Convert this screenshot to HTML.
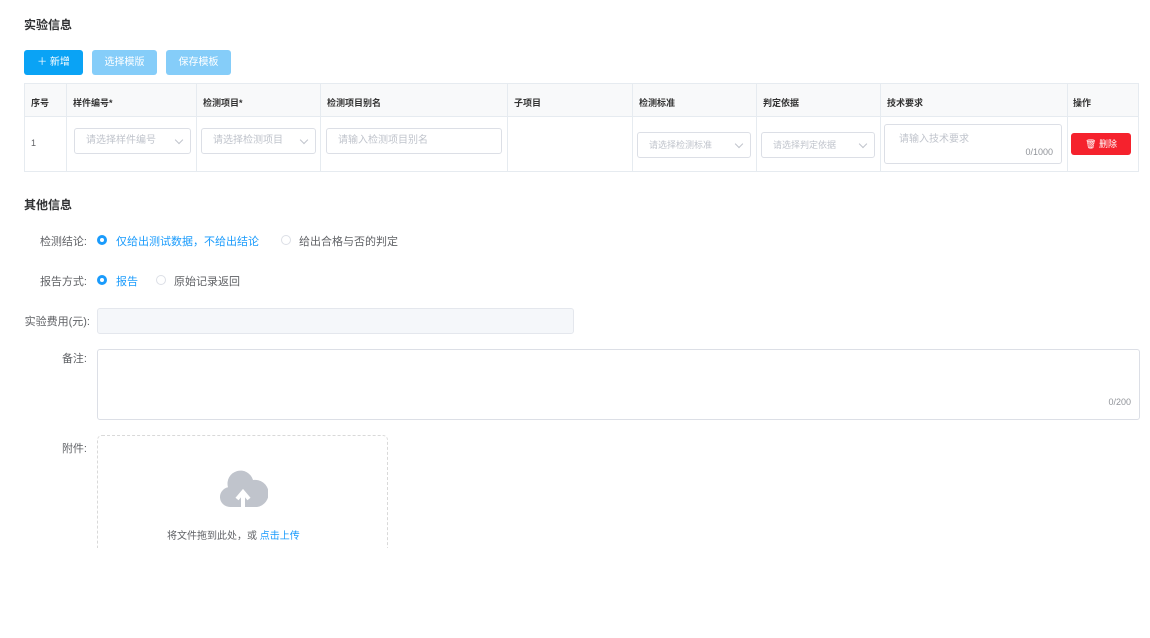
<!DOCTYPE html>
<html><head><meta charset="utf-8"><style>
*{box-sizing:border-box;margin:0;padding:0}
body{width:1150px;height:638px;background:#fff;font-family:"Liberation Sans","Noto Sans CJK SC",sans-serif;font-size:10px;color:#606266;position:relative;overflow:hidden}
.a{position:absolute}
.t{font-size:12px;font-weight:bold;color:#303133}
.btn{position:absolute;top:50px;height:25px;border-radius:3px;color:#fff;font-size:10px;line-height:25px;text-align:center}
.cell{position:absolute;border-right:1px solid #e6ebf0;height:100%;top:0}
.in{position:absolute;border:1px solid #dcdfe6;border-radius:3px;background:#fff;color:#c0c4cc;font-size:10px;padding-left:11px;line-height:24px;height:26px;top:128px}
.ch{position:absolute;right:8px;top:8px;width:6px;height:6px;border-right:1px solid #c0c4cc;border-bottom:1px solid #c0c4cc;transform:rotate(45deg)}
.r{position:absolute;width:10px;height:10px;border-radius:50%;border:1px solid #dcdfe6}
.r.on{border:3px solid #1a9bfc;background:#fff}
.lbl{position:absolute;font-size:11px;color:#606266;text-align:right}
.f{font-size:11px}
</style></head><body>
<div class="a t" style="left:24px;top:16px">实验信息</div>
<div class="btn" style="left:24px;width:59px;background:#0aa3f5">＋ 新增</div>
<div class="btn" style="left:92px;width:65px;background:#85cdf9">选择模版</div>
<div class="btn" style="left:166px;width:65px;background:#85cdf9">保存模板</div>

<div class="a" style="left:24px;top:83px;width:1115px;height:89px;border:1px solid #e6ebf0">
 <div class="a" style="left:0;top:0;width:100%;height:33px;background:#f8f9fa;border-bottom:1px solid #e6ebf0"></div>
 <div class="cell" style="left:41px"></div><div class="cell" style="left:171px"></div><div class="cell" style="left:295px"></div><div class="cell" style="left:482px"></div><div class="cell" style="left:607px"></div><div class="cell" style="left:731px"></div><div class="cell" style="left:855px"></div><div class="cell" style="left:1042px"></div>
 <div class="a" style="top:12px;left:6px;font-weight:bold;color:#333;font-size:9px">序号</div>
 <div class="a" style="top:12px;left:48px;font-weight:bold;color:#333;font-size:9px">样件编号*</div>
 <div class="a" style="top:12px;left:178px;font-weight:bold;color:#333;font-size:9px">检测项目*</div>
 <div class="a" style="top:12px;left:302px;font-weight:bold;color:#333;font-size:9px">检测项目别名</div>
 <div class="a" style="top:12px;left:489px;font-weight:bold;color:#333;font-size:9px">子项目</div>
 <div class="a" style="top:12px;left:614px;font-weight:bold;color:#333;font-size:9px">检测标准</div>
 <div class="a" style="top:12px;left:738px;font-weight:bold;color:#333;font-size:9px">判定依据</div>
 <div class="a" style="top:12px;left:862px;font-weight:bold;color:#333;font-size:9px">技术要求</div>
 <div class="a" style="top:12px;left:1048px;font-weight:bold;color:#333;font-size:9px">操作</div>
 <div class="a" style="top:54px;left:6px;font-size:9px">1</div>
</div>
<div class="in" style="left:74px;width:117px">请选择样件编号<span class="ch"></span></div>
<div class="in" style="left:201px;width:115px">请选择检测项目<span class="ch"></span></div>
<div class="in" style="left:326px;width:176px">请输入检测项目别名</div>
<div class="in" style="left:637px;width:114px;top:132px;font-size:9px">请选择检测标准<span class="ch"></span></div>
<div class="in" style="left:761px;width:114px;top:132px;font-size:9px">请选择判定依据<span class="ch"></span></div>
<div class="a" style="left:884px;top:124px;width:178px;height:40px;border:1px solid #dcdfe6;border-radius:3px;color:#c0c4cc;padding:5px 0 0 14px">请输入技术要求<span class="a" style="right:8px;bottom:6px;font-size:9px;color:#909399">0/1000</span></div>
<div class="a" style="left:1071px;top:133px;width:60px;height:22px;background:#f5222d;border-radius:3px;color:#fff;text-align:center;line-height:22px;font-size:9px">🗑 删除</div>

<div class="a t" style="left:24px;top:196px">其他信息</div>
<div class="lbl" style="left:20px;width:67px;top:233px">检测结论:</div>
<div class="r on" style="left:97px;top:235px"></div>
<div class="a f" style="left:116px;top:233px;color:#1a9bfc">仅给出测试数据，不给出结论</div>
<div class="r" style="left:281px;top:235px"></div>
<div class="a f" style="left:299px;top:233px">给出合格与否的判定</div>
<div class="lbl" style="left:20px;width:67px;top:273px">报告方式:</div>
<div class="r on" style="left:97px;top:275px"></div>
<div class="a f" style="left:116px;top:273px;color:#1a9bfc">报告</div>
<div class="r" style="left:156px;top:275px"></div>
<div class="a f" style="left:174px;top:273px">原始记录返回</div>
<div class="lbl" style="left:4px;width:86px;top:313px">实验费用(元):</div>
<div class="a" style="left:97px;top:308px;width:477px;height:26px;border:1px solid #e4e7ed;border-radius:3px;background:#f5f7fa"></div>
<div class="lbl" style="left:20px;width:67px;top:350px">备注:</div>
<div class="a" style="left:97px;top:349px;width:1043px;height:71px;border:1px solid #dcdfe6;border-radius:3px"><span class="a" style="right:8px;bottom:12px;font-size:9px;color:#909399">0/200</span></div>
<div class="lbl" style="left:20px;width:67px;top:440px">附件:</div>
<div class="a" style="left:97px;top:435px;width:291px;height:130px;border:1px dashed #d9d9d9;border-radius:5px"></div>
<svg class="a" style="left:218px;top:470px" width="50" height="40" viewBox="0 0 50 40"><path d="M12 37a10 10 0 0 1-2-19.8A13 13 0 0 1 35 10a11 11 0 0 1 4 27z" fill="#c0c4cc"/><path d="M25 37V24m-6 5 6-7 6 7" stroke="#fff" stroke-width="4" fill="none"/></svg>
<div class="a" style="left:167px;top:527px">将文件拖到此处，或 <span style="color:#1a9bfc">点击上传</span></div>
<div class="a" style="left:0;top:548px;width:1150px;height:90px;background:#fff"></div>
</body></html>
